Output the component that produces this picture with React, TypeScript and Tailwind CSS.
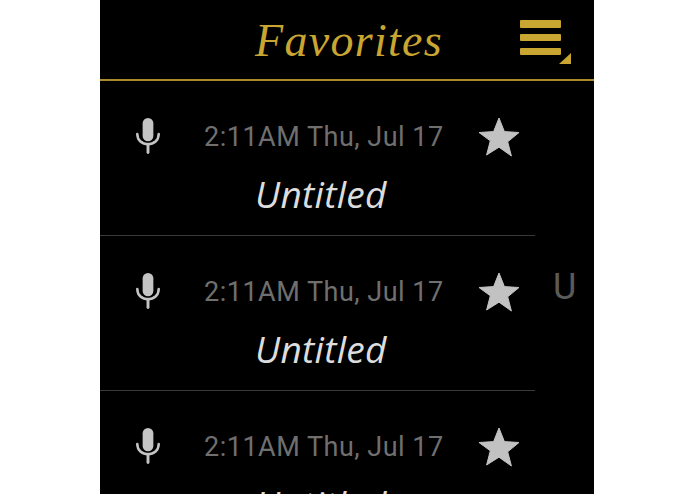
const rows = [0, 1, 2];

function Mic() {
  return (
    <svg viewBox="0 0 26 38" className="w-[26px] h-[37px] mb-[3px] shrink-0 text-[#c4c4c4]" fill="none">
      <rect x="7.5" y="1" width="11" height="24" rx="5.5" fill="currentColor" />
      <path d="M2 17.5c0 6.5 5 10.5 11 10.5s11-4 11-10.5" stroke="currentColor" strokeWidth="2.6" strokeLinecap="round" />
      <path d="M13 28v8.5" stroke="currentColor" strokeWidth="3" strokeLinecap="round" />
    </svg>
  );
}

function Star() {
  return (
    <svg viewBox="0 0 42 40" className="w-[42px] h-[40px] shrink-0 text-[#c2c2c2]">
      <path
        fill="currentColor"
        stroke="currentColor"
        strokeWidth="1"
        strokeLinejoin="round"
        d="M21 1l5.4 13.6 14.6.9-11.3 9.3 3.7 14.2L21 30.2 8.6 38l3.7-14.2L1 15.5l14.6-.9z"
      />
    </svg>
  );
}

function MenuIcon() {
  return (
    <svg viewBox="0 0 52 46" className="w-[52px] h-[46px] text-[#c9a531]">
      <rect x="0" y="0" width="41" height="8" rx="1" fill="currentColor" />
      <rect x="0" y="14" width="41" height="7" rx="1" fill="currentColor" />
      <rect x="0" y="28" width="41" height="7" rx="1" fill="currentColor" />
      <path d="M39 44l12-11v11z" fill="currentColor" />
    </svg>
  );
}

function Row({ last }: { last: boolean }) {
  return (
    <div className={`h-[155px] pt-[36px] ${last ? "" : "border-b border-[#3a3a3a]"}`}>
      <div className="flex items-center h-[40px] pl-[35px]">
        <Mic />
        <span className="ml-[43px] w-[274px] text-[27px] tracking-[0.5px] text-[#6f6f6f] font-['Roboto',sans-serif] leading-none whitespace-nowrap">
          2:11AM Thu, Jul 17
        </span>
        <Star />
      </div>
      <p className="mt-[14px] pl-[155px] text-[37px] tracking-[0.3px] italic leading-[46px] text-[#dddddd] font-['Open_Sans',sans-serif]">
        Untitled
      </p>
    </div>
  );
}

export default function App() {
  return (
    <div className="h-[494px] bg-white overflow-hidden">
      <div className="w-[494px] h-[494px] ml-[100px] bg-black overflow-hidden">
        <header className="relative h-[81px] border-b-[2px] border-[#a98a2c]">
          <h1 className="pt-[11px] pl-[155px] text-[46px] leading-[60px] italic tracking-[1.3px] text-[#c9a531] font-['Liberation_Serif',serif]">
            Favorites
          </h1>
          <div className="absolute left-[420px] top-[20px]">
            <MenuIcon />
          </div>
        </header>
        <div className="flex">
          <div className="w-[435px] shrink-0">
            {rows.map((r) => (
              <Row key={r} last={r === 2} />
            ))}
          </div>
          <div className="pl-[18px] pt-[186px] text-[36px] leading-[40px] text-[#5a5a5a] font-['Roboto',sans-serif]">
            U
          </div>
        </div>
      </div>
    </div>
  );
}
